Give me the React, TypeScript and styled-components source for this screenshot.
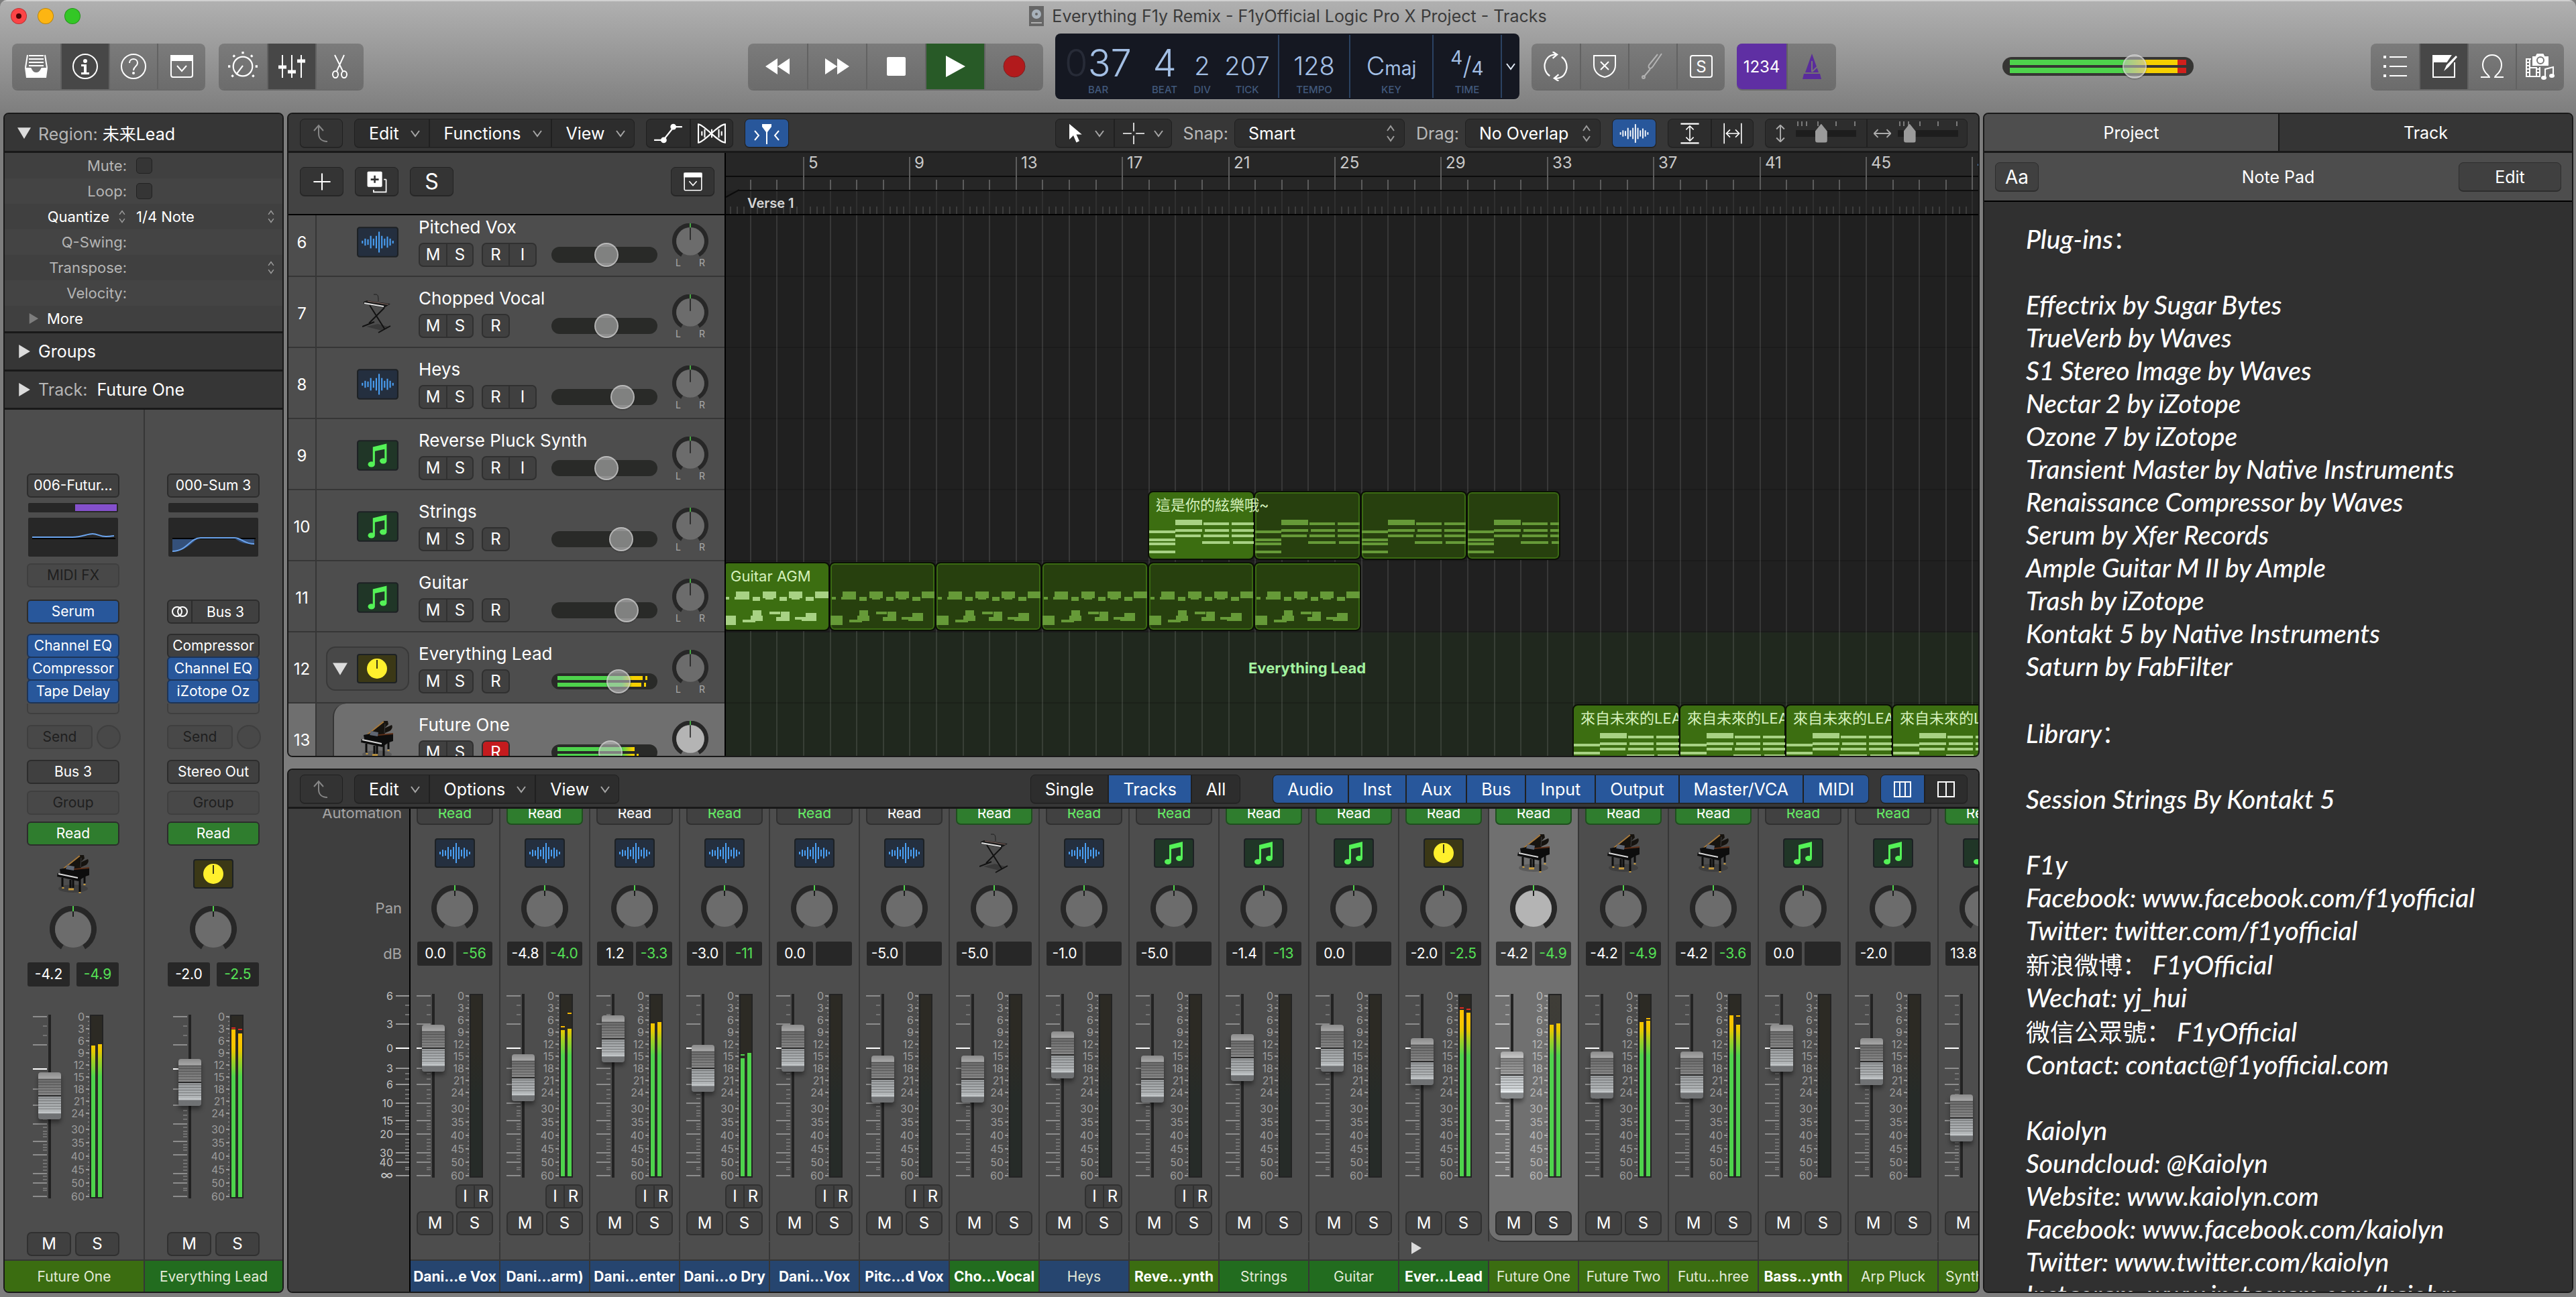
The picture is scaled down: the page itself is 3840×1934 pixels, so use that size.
import React from "react";
import styled, { createGlobalStyle, css } from "styled-components";

const FONT = `Inter, "Noto Sans CJK TC", sans-serif`;
const BLUE = "#28579b";
const INK = "#191919";

const GlobalStyle = createGlobalStyle`
  *, *::before, *::after { box-sizing: border-box; }
  body { margin: 0; background: #7d7d7d; font-family: ${FONT}; font-size: 25px; color: #fff; -webkit-font-smoothing: antialiased; }
  button, input, select { font: inherit; color: inherit; margin: 0; padding: 0; border: 0; background: none; }
  svg { display: block; flex: none; }
  p, h1, h2 { margin: 0; font-weight: inherit; font-size: inherit; }
`;

/* ------------------------------------------------------------------ data */

type IconKind = "wave" | "note" | "keys" | "piano" | "folder";
type ReadMode = "ghost" | "on" | "off";

interface TrackRow {
  n: number;
  name: string;
  icon: IconKind;
  input?: boolean;
  vol: number;
  levels?: { bars: [number, number]; peaks: number[] };
  folder?: boolean;
  selected?: boolean;
}

const TRACKS: TrackRow[] = [
  { n: 6, name: "Pitched Vox", icon: "wave", input: true, vol: 64 },
  { n: 7, name: "Chopped Vocal", icon: "keys", vol: 64 },
  { n: 8, name: "Heys", icon: "wave", input: true, vol: 88 },
  { n: 9, name: "Reverse Pluck Synth", icon: "note", input: true, vol: 64 },
  { n: 10, name: "Strings", icon: "note", vol: 86 },
  { n: 11, name: "Guitar", icon: "note", vol: 94 },
  { n: 12, name: "Everything Lead", icon: "folder", vol: 82, folder: true, levels: { bars: [127, 125], peaks: [131, 129] } },
  { n: 13, name: "Future One", icon: "piano", vol: 70, selected: true, levels: { bars: [115, 115], peaks: [0, 118] } },
];

interface Channel {
  name: string;
  color: string;
  bold?: boolean;
  icon: IconKind;
  read: ReadMode;
  gain: string;
  peak?: string;
  fader: number;
  meter?: [number, number];
  holds?: [number, number];
  clip?: boolean;
  input?: boolean;
  selected?: boolean;
  member?: boolean;
  lastMember?: boolean;
  stack?: boolean;
}

const NAVY = "#26456f";
const GREEN = "#226c1f";
const OLIVE = "#3b6d11";

const CHANNELS: Channel[] = [
  { name: "Dani...e Vox", color: NAVY, bold: true, icon: "wave", read: "ghost", gain: "0.0", peak: "-56", fader: 190, input: true },
  { name: "Dani...arm)", color: NAVY, bold: true, icon: "wave", read: "on", gain: "-4.8", peak: "-4.0", fader: 146, meter: [54, 52], holds: [46, 26], input: true },
  { name: "Dani...enter", color: NAVY, bold: true, icon: "wave", read: "off", gain: "1.2", peak: "-3.3", fader: 204, meter: [44, 42], input: true },
  { name: "Dani...o Dry", color: NAVY, bold: true, icon: "wave", read: "ghost", gain: "-3.0", peak: "-11", fader: 160, meter: [96, 88], holds: [88, 0], input: true },
  { name: "Dani...Vox", color: NAVY, bold: true, icon: "wave", read: "ghost", gain: "0.0", fader: 190, input: true },
  { name: "Pitc...d Vox", color: NAVY, bold: true, icon: "wave", read: "off", gain: "-5.0", fader: 144, input: true },
  { name: "Cho...Vocal", color: GREEN, bold: true, icon: "keys", read: "on", gain: "-5.0", fader: 144 },
  { name: "Heys", color: NAVY, icon: "wave", read: "ghost", gain: "-1.0", fader: 180, input: true },
  { name: "Reve...ynth", color: OLIVE, bold: true, icon: "note", read: "ghost", gain: "-5.0", fader: 144, input: true },
  { name: "Strings", color: GREEN, icon: "note", read: "on", gain: "-1.4", peak: "-13", fader: 176 },
  { name: "Guitar", color: GREEN, icon: "note", read: "on", gain: "0.0", fader: 190 },
  { name: "Ever...Lead", color: GREEN, bold: true, icon: "folder", read: "on", gain: "-2.0", peak: "-2.5", fader: 170, meter: [24, 28], holds: [18, 20], clip: true, stack: true },
  { name: "Future One", color: OLIVE, icon: "piano", read: "on", gain: "-4.2", peak: "-4.9", fader: 150, meter: [46, 44], selected: true, member: true },
  { name: "Future Two", color: OLIVE, icon: "piano", read: "on", gain: "-4.2", peak: "-4.9", fader: 150, meter: [42, 40], holds: [0, 34], member: true },
  { name: "Futu...hree", color: OLIVE, icon: "piano", read: "on", gain: "-4.2", peak: "-3.6", fader: 150, meter: [32, 46], holds: [0, 30], member: true, lastMember: true },
  { name: "Bass...ynth", color: OLIVE, bold: true, icon: "note", read: "ghost", gain: "0.0", fader: 190 },
  { name: "Arp Pluck", color: OLIVE, icon: "note", read: "ghost", gain: "-2.0", fader: 170 },
  { name: "Synth Lead", color: OLIVE, icon: "note", read: "on", gain: "13.8", fader: 86 },
];

const NOTES = [
  "Plug-ins：", "", "Effectrix by Sugar Bytes", "TrueVerb by Waves", "S1 Stereo Image by Waves",
  "Nectar 2 by iZotope", "Ozone 7 by iZotope", "Transient Master by Native Instruments",
  "Renaissance Compressor by Waves", "Serum by Xfer Records", "Ample Guitar M II by Ample",
  "Trash by iZotope", "Kontakt 5 by Native Instruments", "Saturn by FabFilter", "", "Library：", "",
  "Session Strings By Kontakt 5", "", "F1y", "Facebook: www.facebook.com/f1yofficial",
  "Twitter: twitter.com/f1yofficial", "新浪微博： F1yOfficial", "Wechat: yj_hui", "微信公眾號： F1yOfficial",
  "Contact: contact@f1yofficial.com", "", "Kaiolyn", "Soundcloud: @Kaiolyn", "Website: www.kaiolyn.com",
  "Facebook: www.facebook.com/kaiolyn", "Twitter: www.twitter.com/kaiolyn", "Instagram: www.instagram.com/kaiolyn",
];

/* ----------------------------------------------------------------- icons */

const Chevron = ({ c = "#a5a5a5", w = 14 }: { c?: string; w?: number }) => (
  <svg width={w} height={w} viewBox="0 0 14 14" fill="none" stroke={c} strokeWidth="2"><path d="M1 3l6 8 6-8" /></svg>
);
const Stepper = ({ h = 26 }: { h?: number }) => (
  <svg width="14" height={h} viewBox="0 0 14 26" fill="none" stroke="#9b9b9b" strokeWidth="2"><path d="M2 9l5-7 5 7M2 17l5 7 5-7" /></svg>
);
const Tri = ({ dir = "right", s = 18, c = "#dcdcdc" }: { dir?: "right" | "down"; s?: number; c?: string }) => (
  <svg width={s} height={s} viewBox="0 0 18 18" fill={c}><path d={dir === "right" ? "M2 0L17 9 2 18z" : "M0 2h18L9 17z"} /></svg>
);
const BackArrow = () => (
  <svg width="26" height="28" viewBox="0 0 26 28" fill="none" stroke="#868686" strokeWidth="2"><path d="M2 10l7-8 7 8M9 2v12c0 7 4 12 13 12" /></svg>
);

const WaveBars = ({ c }: { c: string }) => (
  <g fill={c}>
    {[4, 10, 8, 18, 10, 18, 30, 18, 10, 16, 10, 4].map((h, i) => (
      <rect key={i} x={7 + i * 4} y={22 - h / 2} width="2" height={h} />
    ))}
  </g>
);
const TileIcon = ({ kind, w = 60, h = 44 }: { kind: IconKind; w?: number; h?: number }) => {
  if (kind === "piano")
    return (
      <svg width="52" height="60" viewBox="0 0 52 60">
        <ellipse cx="26" cy="52" rx="22" ry="6" fill="#000" opacity=".18" />
        <path d="M12 22L36 2h6l1 5-6 6 11-5c2 3 0 7-3 9l-7 3-2 4z" fill="#16130f" />
        <path d="M12 22L36 3" stroke="#a87a3c" strokeWidth="2" />
        <path d="M38 6l-1 14" stroke="#3c3c3c" />
        <path d="M20 23l30-3v3l-12 6z" fill="#5e2f18" />
        <path d="M6 23l10-2 12 3 22-2v10l-6 2-8 5-2 2-32-7 1-5h4z" fill="#0d0d0d" />
        <path d="M17 17l11 2-1 6-12-2z" fill="#5f6672" />
        <path d="M4 30l29 6" stroke="#d9d9d9" strokeWidth="2" />
        <path d="M10 36v13M22 39v12M26 39v12M36 38v19M43 32v12" stroke="#0d0d0d" strokeWidth="3" />
        <path d="M11 50v2M19 53h8M36 57v2M43 45v2" stroke="#c79a3c" strokeWidth="3" />
      </svg>
    );
  if (kind === "keys")
    return (
      <svg width="44" height="60" viewBox="0 0 44 60" fill="none">
        <path d="M6 50l17-4 16 4-10 6z" fill="#000" opacity=".25" />
        <path d="M17 2h3c4 0 4 4 4 10" stroke="#1e1e1e" />
        <path d="M11 18l22 35M33 22L10 45M0 50l18-7M24 59l18-10" stroke="#121212" strokeWidth="2" />
        <path d="M2 13l5-2 35 5-9 6-31-6z" fill="#1a1a1a" />
        <path d="M3 15l29 5" stroke="#e2e2e2" strokeWidth="2" />
        <path d="M8 12l31 5" stroke="#8a6d66" />
      </svg>
    );
  const bg = kind === "wave" ? "#242f3f" : kind === "note" ? "#203627" : "#3b3816";
  return (
    <svg width={w} height={h} viewBox="0 0 60 44">
      <rect x="1" y="1" width="58" height="42" rx="3" fill={bg} stroke="#1d2124" strokeWidth="2" />
      {kind === "wave" && <WaveBars c="#4aa0f5" />}
      {kind === "note" && (
        <g fill="#54f257">
          <path d="M23 10l20-5v24h-3V13l-14 3v18h-3z" />
          <ellipse cx="21" cy="35" rx="5" ry="4" /><ellipse cx="38" cy="30" rx="5" ry="4" />
        </g>
      )}
      {kind === "folder" && (<><circle cx="30" cy="22" r="15" fill="#fff02d" /><path d="M30 9v13" stroke="#3b3816" strokeWidth="2" /></>)}
    </svg>
  );
};

const Knob = ({ size = 70, long, lit }: { size?: number; long?: boolean; lit?: boolean }) => (
  <svg width={size} height={size} viewBox="0 0 70 70" role="img" aria-label="Pan, center">
    <path d="M19 61A31 31 0 1 1 51 61" fill="none" stroke="#272727" strokeWidth="8" />
    <circle cx="35" cy="35" r="27" fill={lit ? "#b4b4b4" : "#6c6c6c"} />
    <path d={long ? "M35 8v24" : "M35 8v8"} stroke="#1e1e1e" strokeWidth="2" />
    <path d="M35 0v8" stroke="#4fd24b" strokeWidth="2" />
  </svg>
);

const Glyph = ({ children, s = 40, o = 1 }: { children: React.ReactNode; s?: number; o?: number }) => (
  <svg width={s} height={s} viewBox="0 0 40 40" fill="none" stroke="#fff" strokeWidth="2" opacity={o}>{children}</svg>
);
const G = {
  library: <Glyph><path d="M9 4h22M9 9h22M9 14h22M9 19h22" /><path d="M7 3L4 22M33 3l3 19" /><path d="M3 22h9c1 0 2 7 8 7s7-7 8-7h9l-2 15H5z" fill="#fff" stroke="none" /></Glyph>,
  info: <Glyph><circle cx="20" cy="20" r="18" /><circle cx="20" cy="12" r="3" fill="#fff" stroke="none" /><path d="M14 17h8v12h4v3H14v-3h4v-9h-4z" fill="#fff" stroke="none" /></Glyph>,
  help: <Glyph><circle cx="20" cy="20" r="18" /><path d="M14 15c0-8 12-8 12 0 0 5-6 5-6 11" /><circle cx="20" cy="30" r="2" fill="#fff" stroke="none" /></Glyph>,
  toolbar: <Glyph><rect x="4" y="4" width="32" height="32" rx="3" /><path d="M4 4h32v7H4z" fill="#fff" /><path d="M13 19l7 8 7-8" /></Glyph>,
  toolbarSm: <Glyph s={32}><rect x="4" y="4" width="32" height="32" rx="2" /><path d="M4 4h32v7H4z" fill="#fff" /><path d="M13 19l7 8 7-8" /></Glyph>,
  smart: <Glyph s={44}><circle cx="20" cy="20" r="13" /><path d="M20 19L11 31" /><path d="M20 0v3M7 5l2 2M33 5l-2 2M0 20h3M37 20h3M5 34l2-2M35 34l-2-2" strokeWidth="3" /></Glyph>,
  mixer: <Glyph><path d="M6 3v34M20 3v34M34 3v34" /><path d="M0 21h12M14 28h12M28 12h12" strokeWidth="5" /></Glyph>,
  scissors: <Glyph><path d="M12 3l12 24M26 3L15 27" /><ellipse cx="13" cy="32" rx="4" ry="5" /><ellipse cx="26" cy="32" rx="4" ry="5" /></Glyph>,
  rewind: <Glyph><path d="M20 8v24L2 20zM38 8v24L20 20z" fill="#fff" stroke="none" /></Glyph>,
  forward: <Glyph><path d="M2 8v24l18-12zM20 8v24l18-12z" fill="#fff" stroke="none" /></Glyph>,
  stop: <Glyph><rect x="6" y="6" width="28" height="28" rx="2" fill="#fff" stroke="none" /></Glyph>,
  play: <Glyph><path d="M6 4v32l29-16z" fill="#fff" stroke="none" /></Glyph>,
  record: <Glyph><circle cx="20" cy="20" r="16" fill="#b21a1c" stroke="#7c2020" strokeWidth="1" /></Glyph>,
  cycle: <Glyph s={44}><path d="M22 4h-4C3 6 1 26 12 33M18 36h5c14-2 16-22 5-29M16 0l6 4-6 5M24 31l-6 5 6 4" /></Glyph>,
  replace: <Glyph><path d="M4 4h32v14c0 10-7 16-16 18C11 34 4 28 4 18z" /><path d="M14 13l12 12M26 13L14 25" /></Glyph>,
  tuner: <Glyph o={0.45}><path d="M33 1L20 20c-3 5-8 3-6-2L27 2M16 24L6 36" /><circle cx="6" cy="36" r="2" /></Glyph>,
  solo: <Glyph><rect x="4" y="4" width="32" height="32" rx="3" /></Glyph>,
  metro: <svg width="40" height="40" viewBox="0 0 40 40"><path d="M20 1l10 28H10zM8 31h24l2 8H6z" fill="#5a2c9c" /><path d="M20 28L34 15M20 12v16" stroke="#757575" strokeWidth="2" /></svg>,
  list: <Glyph><path d="M12 6h26M12 20h26M12 34h26" /><path d="M3 6h4M3 20h4M3 34h4" strokeWidth="4" /></Glyph>,
  notepad: <Glyph><path d="M36 14v22H4V4h26" /><path d="M4 4h26l-6 9H4z" fill="#fff" /><path d="M38 4L24 18l-4 9 7-6L40 6z" fill="#fff" stroke="none" /></Glyph>,
  loop: <Glyph><path d="M3 36h13c0-3-10-6-10-18C6 9 12 3 20 3s14 6 14 15c0 12-10 15-10 18h13" /></Glyph>,
  media: (
    <svg width="44" height="40" viewBox="0 0 44 40" fill="none" stroke="#fff" strokeWidth="2">
      <path d="M1 9h20v26H1zM6 9v26M16 9v26M6 22h10" /><path d="M1 14h5M1 19h5M1 24h5M1 29h5M16 24h5M16 29h5" />
      <path d="M9 4h5l2-4h11l2 4h6v16H9z" fill="#fff" stroke="#757575" /><circle cx="22" cy="11" r="5" stroke="#757575" />
      <path d="M29 37V23l13-3v14" stroke="#757575" strokeWidth="6" /><path d="M29 36V24l12-3v12" />
      <ellipse cx="27" cy="37" rx="3" ry="2" fill="#fff" /><ellipse cx="39" cy="34" rx="3" ry="2" fill="#fff" />
    </svg>
  ),
  automation: <Glyph s={44}><path d="M1 29h12M15 27L27 12M27 11h12" /><circle cx="14" cy="29" r="4" fill="#fff" stroke="none" /><circle cx="27" cy="11" r="4" fill="#fff" stroke="none" /></Glyph>,
  flex: <Glyph s={42}><path d="M1 7v26c8 0 28-26 38-26v26C29 33 9 7 1 7z" /><path d="M6 17v6M10 14v12M30 14v12M34 17v6M20 14v12" /></Glyph>,
  catch: <Glyph><path d="M2 16l6 7-6 7M38 16l-6 7 6 7M20 14v22" /><path d="M13 6h14v4l-6 8h-2l-6-8z" fill="#fff" stroke="none" /></Glyph>,
  pointer: <Glyph s={30}><path d="M8 1v31l8-8 6 14 6-3-6-13h11z" fill="#fff" stroke="none" /></Glyph>,
  marquee: <Glyph s={32}><path d="M20 0v16M20 24v16M0 20h16M24 20h16" /></Glyph>,
  vfit: <Glyph s={32}><path d="M3 2h34M3 38h34" strokeWidth="3" /><path d="M20 7v26M13 13l7-7 7 7M13 27l7 7 7-7" /></Glyph>,
  hfit: <Glyph s={32}><path d="M4 1v38M36 1v38M8 20h24M15 13l-7 7 7 7M25 13l7 7-7 7" /></Glyph>,
  vzoom: <Glyph s={26} o={0.6}><path d="M20 1v38M11 10l9-9 9 9M11 30l9 9 9-9" strokeWidth="3" /></Glyph>,
  hzoom: <Glyph s={26} o={0.6}><path d="M1 20h38M10 11l-9 9 9 9M30 11l9 9-9 9" strokeWidth="3" /></Glyph>,
  plus: <Glyph s={28}><path d="M20 2v36M2 20h36" strokeWidth="3" /></Glyph>,
  dup: <Glyph s={34}><path d="M36 16v22H14v-4" /><path d="M36 16h-4" /><rect x="3" y="2" width="26" height="27" rx="2" fill="#fff" stroke="none" /><path d="M16 9v13M9 16h14" stroke="#333" strokeWidth="3" /></Glyph>,
  three: <svg width="26" height="24" viewBox="0 0 26 24" fill="none" stroke="#fff" strokeWidth="2"><path d="M1 1h24v22H1zM9 1v22M17 1v22" /></svg>,
  two: <svg width="26" height="24" viewBox="0 0 26 24" fill="none" stroke="#fff" strokeWidth="2"><path d="M1 1h24v22H1zM13 1v22" /></svg>,
  stereo: <svg width="26" height="16" viewBox="0 0 26 16" fill="none" stroke="#fff" strokeWidth="2"><circle cx="9" cy="8" r="7" /><circle cx="17" cy="8" r="7" /></svg>,
};

/* ---------------------------------------------------------------- header */

const Window = styled.div`
  display: flex; flex-direction: column; height: 100vh; overflow: hidden;
  border-radius: 10px 10px 0 0; background: #7d7d7d;
`;
const Header = styled.header`
  flex: none; height: 168px; display: grid; grid-template-rows: 44px 106px;
  border-top: 2px solid #d0d0d0; background: linear-gradient(#b0b0b0, #7e7e7e);
`;
const TitleRow = styled.div`
  display: grid; grid-template-columns: 1fr auto 1fr; align-items: center; padding: 0 16px;
`;
const Lights = styled.div` display: flex; gap: 16px; `;
const Light = styled.button<{ $c: string }>`
  width: 24px; height: 24px; border-radius: 50%; background: ${p => p.$c};
  border: 1px solid rgba(0, 0, 0, 0.25); display: grid; place-items: center;
`;
const Dot = styled.i` width: 8px; height: 8px; border-radius: 50%; background: #4a0405; `;
const Title = styled.h1` display: flex; align-items: center; gap: 12px; color: #3b3b3b; font-size: 25px; `;
const ToolRow = styled.div`
  display: grid; grid-template-columns: 1fr auto 1fr; align-items: center; padding: 0 18px;
`;
const Zone = styled.div<{ $gap?: number }>` display: flex; align-items: center; gap: ${p => p.$gap ?? 18}px; `;
const RightZone = styled(Zone)` padding-left: 248px; justify-content: space-between; `;
const CenterZone = styled(Zone)` padding-left: 12px; `;
const HGroup = styled.div`
  display: flex; height: 68px; border-radius: 8px; overflow: hidden; box-shadow: 0 2px 0 rgba(60, 60, 60, 0.4);
  background: linear-gradient(#7b7b7b, #6c6c6c);
`;
const HBtn = styled.button<{ $w?: number; $tone?: string }>`
  width: ${p => p.$w ?? 72}px; display: grid; place-items: center; background: ${p => p.$tone ?? "transparent"};
  & + & { border-left: 2px solid #626262; }
  & > * { grid-area: 1 / 1; }
`;
const Lcd = styled.div`
  display: flex; height: 98px; padding: 2px 0; border-radius: 8px; background: #151822; color: #a3bfe4;
  box-shadow: 0 1px 0 #999;
`;
const LcdCell = styled.div<{ $w: number; $line?: boolean }>`
  width: ${p => p.$w}px; display: flex; flex-direction: column; align-items: center; justify-content: flex-end; padding-bottom: 2px;
  border-left: ${p => (p.$line ? "2px solid #2b4262" : "0")};
`;
const LcdValue = styled.span<{ $big?: boolean }>`
  height: 72px; display: flex; align-items: baseline; font-weight: 300; white-space: pre;
  font-size: ${p => (p.$big ? 56 : 38)}px; line-height: ${p => (p.$big ? 84 : 92)}px;
`;
const LcdDim = styled.span` color: #272b37; `;
const LcdSmall = styled.span<{ $up?: boolean }>` font-size: 28px; font-weight: 400; ${p => p.$up && css`align-self: flex-start; line-height: 68px;`} `;
const LcdLabel = styled.span` height: 20px; font-size: 15px; line-height: 20px; color: #41587b; font-weight: 500; `;
const LcdMenu = styled.button` width: 28px; display: grid; place-items: center; border-left: 2px solid #2b4262; `;

const MasterBox = styled.div` position: relative; width: 285px; height: 38px; display: flex; align-items: center; `;
const MasterTrack = styled.div`
  width: 100%; height: 28px; padding: 4px 11px; border-radius: 14px; background: #363533; display: grid; gap: 4px;
`;
const MasterBar = styled.i`
  background: linear-gradient(90deg, #4ed34c 0 64%, #f6d000 78% 95%, #d0201c 95%);
`;
const roundThumb = css`
  -webkit-appearance: none; width: 36px; height: 36px; border-radius: 50%;
  background: rgba(200, 200, 200, 0.55); border: 2px solid rgba(220, 220, 220, 0.55); box-shadow: 0 1px 2px #1116;
`;
const OverRange = styled.input`
  -webkit-appearance: none; position: absolute; inset: 0; width: 100%; height: 100%; background: transparent;
  &::-webkit-slider-thumb { ${roundThumb} }
`;

const SegGlyphText = styled.span` font-size: 24px; `;

const AppHeader = () => (
  <Header>
    <TitleRow>
      <Lights>
        <Light $c="#fb4446" aria-label="Close"><Dot /></Light>
        <Light $c="#fdb512" aria-label="Minimize" />
        <Light $c="#33c726" aria-label="Zoom" />
      </Lights>
      <Title>
        <svg width="22" height="30" viewBox="0 0 22 30"><rect width="22" height="30" fill="#666" /><circle cx="11" cy="12" r="7" fill="#a8b2bb" /><circle cx="11" cy="12" r="2" fill="#666" /><path d="M3 25h16" stroke="#b0b0b0" strokeWidth="2" /></svg>
        Everything F1y Remix - F1yOfficial Logic Pro X Project - Tracks
      </Title>
    </TitleRow>
    <ToolRow>
      <Zone $gap={20}>
        <HGroup>
          <HBtn aria-label="Library">{G.library}</HBtn>
          <HBtn aria-label="Inspector" $tone="#474747">{G.info}</HBtn>
          <HBtn aria-label="Quick Help">{G.help}</HBtn>
          <HBtn aria-label="Toolbar">{G.toolbar}</HBtn>
        </HGroup>
        <HGroup>
          <HBtn aria-label="Smart Controls">{G.smart}</HBtn>
          <HBtn aria-label="Mixer" $tone="#474747">{G.mixer}</HBtn>
          <HBtn aria-label="Editors">{G.scissors}</HBtn>
        </HGroup>
      </Zone>
      <CenterZone>
        <HGroup>
          <HBtn $w={88} aria-label="Rewind">{G.rewind}</HBtn>
          <HBtn $w={88} aria-label="Forward">{G.forward}</HBtn>
          <HBtn $w={88} aria-label="Stop">{G.stop}</HBtn>
          <HBtn $w={88} aria-label="Play" $tone="#285a27">{G.play}</HBtn>
          <HBtn $w={88} aria-label="Record">{G.record}</HBtn>
        </HGroup>
        <Lcd>
          <LcdCell $w={128}><LcdValue $big><LcdDim>0</LcdDim>37</LcdValue><LcdLabel>BAR</LcdLabel></LcdCell>
          <LcdCell $w={70}><LcdValue $big>4</LcdValue><LcdLabel>BEAT</LcdLabel></LcdCell>
          <LcdCell $w={42}><LcdValue>2</LcdValue><LcdLabel>DIV</LcdLabel></LcdCell>
          <LcdCell $w={92}><LcdValue>207</LcdValue><LcdLabel>TICK</LcdLabel></LcdCell>
          <LcdCell $w={106} $line><LcdValue>128</LcdValue><LcdLabel>TEMPO</LcdLabel></LcdCell>
          <LcdCell $w={124} $line><LcdValue>C<LcdSmall>maj</LcdSmall></LcdValue><LcdLabel>KEY</LcdLabel></LcdCell>
          <LcdCell $w={102} $line><LcdValue><LcdSmall $up>4</LcdSmall>/<LcdSmall>4</LcdSmall></LcdValue><LcdLabel>TIME</LcdLabel></LcdCell>
          <LcdMenu aria-label="Display mode"><Chevron c="#e4ecf8" /></LcdMenu>
        </Lcd>
        <HGroup>
          <HBtn aria-label="Cycle">{G.cycle}</HBtn>
          <HBtn aria-label="Replace">{G.replace}</HBtn>
          <HBtn aria-label="Tuner">{G.tuner}</HBtn>
          <HBtn aria-label="Solo">{G.solo}<SegGlyphText>S</SegGlyphText></HBtn>
        </HGroup>
        <HGroup>
          <HBtn $w={74} $tone="#5f2fa3"><SegGlyphText>1234</SegGlyphText></HBtn>
          <HBtn $w={74} aria-label="Metronome">{G.metro}</HBtn>
        </HGroup>
      </CenterZone>
      <RightZone>
        <MasterBox>
          <MasterTrack><MasterBar /><MasterBar /></MasterTrack>
          <OverRange type="range" aria-label="Master volume" min={0} max={249} defaultValue={179} />
        </MasterBox>
        <HGroup>
          <HBtn aria-label="List editors">{G.list}</HBtn>
          <HBtn aria-label="Note pads" $tone="#474747">{G.notepad}</HBtn>
          <HBtn aria-label="Apple Loops">{G.loop}</HBtn>
          <HBtn aria-label="Browsers">{G.media}</HBtn>
        </HGroup>
      </RightZone>
    </ToolRow>
  </Header>
);

/* ---------------------------------------------------------------- panels */

const Workspace = styled.main`
  flex: 1; min-height: 0; display: grid; grid-template-columns: 418px minmax(0, 1fr) 880px; gap: 5px; padding: 0 4px 6px 5px;
`;
const Panel = styled.section`
  border: 2px solid ${INK}; border-radius: 8px; overflow: hidden; background: #4d4d4d;
  display: flex; flex-direction: column; min-height: 0;
`;
const Center = styled.div` display: flex; flex-direction: column; gap: 17px; min-height: 0; `;
const ArrangePanel = styled(Panel)` flex: 1; `;
const MixerPanel = styled(Panel)` flex: none; height: 782px; `;

const Toolbar = styled.div`
  flex: none; height: 58px; padding: 2px 16px 0 17px; display: flex; align-items: center; gap: 17px;
  background: #373737; border-bottom: 3px solid ${INK};
`;
const Spacer = styled.span` flex: 1; `;
const DGroup = styled.div`
  display: flex; height: 43px; border-radius: 7px; overflow: hidden; background: #2d2d2d;
  border: 1px solid #202020; box-shadow: 0 1px 0 #2229;
`;
const DBtn = styled.button<{ $w?: number; $blue?: boolean }>`
  ${p => (p.$w ? css`width: ${p.$w}px;` : css`padding: 0 21px;`)}
  display: flex; align-items: center; justify-content: center; gap: 14px; white-space: nowrap;
  background: ${p => (p.$blue ? BLUE : "transparent")};
  & + & { border-left: 2px solid #202020; }
`;
const MenuBtn = styled(DBtn)` padding: 0 13px 0 21px; gap: 17px; `;
const Ghost = styled(DGroup)` background: #333; `;
const FieldLabel = styled.label` display: flex; align-items: center; gap: 9px; color: #b9b9b9; `;
const SelectBox = styled.span<{ $w: number }>`
  width: ${p => p.$w}px; height: 43px; display: grid; align-items: center; border-radius: 7px; background: #2d2d2d; border: 1px solid #202020;
  & > * { grid-area: 1 / 1; }
  & > svg { justify-self: end; margin-right: 13px; pointer-events: none; }
`;
const Select = styled.select` appearance: none; width: 100%; height: 100%; padding-left: 20px; color: #fff; `;

const Menus = ({ items }: { items: string[] }) => (
  <>
    <Ghost><DBtn $w={62} aria-label="Back"><BackArrow /></DBtn></Ghost>
    <DGroup>{items.map(t => <MenuBtn key={t}>{t}<Chevron /></MenuBtn>)}</DGroup>
  </>
);

const ZoomGroup = styled(DGroup)` & > * + * { border-left: 2px solid #202020; } `;
const ZoomCell = styled.div` width: 150px; display: flex; align-items: center; gap: 10px; padding: 0 15px 0 9px; `;
const ZoomStack = styled.span` display: grid; width: 90px; & > * { grid-area: 1 / 1; } `;
const ZoomRange = styled.input`
  -webkit-appearance: none; width: 90px; height: 42px; background: linear-gradient(#1d1d1d, #1d1d1d) center / 100% 10px no-repeat;
  &::-webkit-slider-thumb { -webkit-appearance: none; width: 18px; height: 28px; background: #9a9a9a; border-radius: 0 0 4px 4px; clip-path: polygon(50% 0, 100% 40%, 100% 100%, 0 100%, 0 40%); }
`;
const ZoomTicks = () => (
  <svg width="90" height="42" viewBox="0 0 90 42" stroke="#7a7a7a" strokeWidth="2"><path d="M3 3v7M9 3v7M16 3v7M33 3v7M60 3v7M88 3v7" /></svg>
);

/* ------------------------------------------------------------- inspector */

const SectionHead = styled.button<{ $first?: boolean }>`
  flex: none; height: ${p => (p.$first ? 58 : 57)}px; padding-left: 19px; display: flex; align-items: center; gap: 11px; text-align: left;
  background: #363636; border-bottom: 3px solid ${INK};
`;
const Dim = styled.span` color: #b5b5b5; `;
const ParamRow = styled.div<{ $lit?: boolean }>`
  flex: none; height: 38px; padding-right: 10px; display: grid; grid-template-columns: 182px 1fr auto; gap: 14px; align-items: center;
  font-size: 22px; color: ${p => (p.$lit ? "#fff" : "#b5b5b5")}; background: #404040;
  &:nth-of-type(even) { background: #444; }
`;
const ParamLabel = styled.label` display: flex; gap: 12px; align-items: center; justify-content: flex-end; `;
const Tick = styled.input`
  appearance: none; width: 24px; height: 24px; border-radius: 5px; background: #353535; border: 1px solid #222;
`;
const MoreBtn = styled.button` display: flex; gap: 12px; align-items: center; padding-left: 35px; color: #fff; `;
const ParamList = styled.div` flex: none; border-bottom: 3px solid ${INK}; `;

const ChannelPair = styled.div` flex: 1; display: grid; grid-template-columns: 1fr 1fr; min-height: 0; `;
const InsStrip = styled.div`
  display: flex; flex-direction: column; background: #4d4d4d;
  & + & { border-left: 2px solid #363636; }
`;
const InsBody = styled.div` flex: 1; width: 138px; margin: 95px 0 0 33px; display: flex; flex-direction: column; `;
const Slot = styled.button<{ $tone?: string; $mt?: number; $flat?: boolean }>`
  flex: none; height: 36px; margin-top: ${p => p.$mt ?? 0}px; border-radius: 6px; border: 2px solid #2c2c2c; white-space: nowrap;
  font-size: 21px; line-height: 30px; background: ${p => p.$tone ?? "#404040"};
  ${p => p.$flat && css`background: #484848; border-color: #3f3f3f; color: #1f1f1f;`}
`;
const Plugin = styled(Slot)` margin-top: -2px; border-color: ${p => (p.$tone ? "#1d3456" : "#2c2c2c")}; &:first-child { margin-top: 0; } `;
const PluginList = styled.div` margin-top: 15px; display: flex; flex-direction: column; `;
const PluginEnd = styled.i` height: 16px; border: 2px solid #3f3f3f; border-top: 0; border-radius: 0 0 6px 6px; `;
const InputSlot = styled.div` display: grid; grid-template-columns: 34px 1fr; height: 36px; margin-top: 18px; border: 2px solid #2c2c2c; border-radius: 6px; background: #404040; overflow: hidden; `;
const InputPart = styled.button` display: grid; place-items: center; font-size: 21px; & + & { border-left: 2px solid #2c2c2c; } `;
const GainBar = styled.div<{ $on?: boolean }>`
  height: 14px; margin: 8px 2px 0; padding: 2px; border-radius: 2px; background: #272727;
  &::after { content: ""; display: ${p => (p.$on ? "block" : "none")}; margin-left: 68px; height: 10px; background: #8450cc; }
`;
const EqView = styled.div` height: 58px; margin: 8px 2px 0; border-radius: 2px; background: #272727; `;
const SendRow = styled.div` display: grid; grid-template-columns: 98px 36px; gap: 6px; margin: 16px -3px 0 0; `;
const SendDial = styled.i` height: 36px; border-radius: 50%; background: #484848; border: 2px solid #3f3f3f; `;
const IconSpot = styled.div` height: 60px; margin-top: 12px; display: grid; place-items: center; `;
const KnobSpot = styled.div` margin-top: 18px; display: flex; justify-content: center; `;
const DbRow = styled.div<{ $wide?: boolean; $lit?: boolean }>`
  margin: 14px 1px 0; display: grid; grid-template-columns: 1fr 1fr; gap: ${p => (p.$wide ? 10 : 4)}px; font-size: 21px;
  & > span { height: 36px; line-height: 36px; text-align: center; border-radius: 3px; background: ${p => (p.$lit ? "#383838" : "#272727")}; }
  & > span + span { color: #55e056; }
`;
const TwoButtons = styled.div<{ $mt: number; $gap: number }>`
  margin-top: ${p => p.$mt}px; display: grid; grid-template-columns: 1fr 1fr; gap: ${p => p.$gap}px;
`;
const SmallBtn = styled.button` height: 36px; border-radius: 7px; background: #404040; border: 2px solid #303030; font-size: 24px; line-height: 30px; `;
const NameBar = styled.div<{ $c: string; $bold?: boolean }>`
  flex: none; height: 48px; display: grid; place-items: center; border-top: 2px solid #363636; white-space: nowrap; overflow: hidden;
  font-size: 21px; font-weight: ${p => (p.$bold ? 700 : 400)}; color: ${p => (p.$bold ? "#fff" : "#e3ead9")}; background: ${p => p.$c};
`;

/* ----------------------------------------------------------- fader block */

const FaderRow = styled.div` margin-top: 42px; display: flex; position: relative; `;
const FaderInput = styled.input<{ $lit?: boolean }>`
  -webkit-appearance: none; appearance: none; position: absolute; left: 8px; top: -32px; width: 34px; height: 338px;
  writing-mode: vertical-lr; direction: rtl; background: transparent;
  &::-webkit-slider-runnable-track { background: transparent; }
  &::-webkit-slider-thumb {
    -webkit-appearance: none; width: 34px; height: 70px; border-radius: 4px; box-shadow: 0 5px 6px rgba(0, 0, 0, 0.4);
    filter: ${p => (p.$lit ? "brightness(1.2)" : "none")};
    background:
      linear-gradient(#2a2a2a, #2a2a2a) 0 34px / 100% 2px no-repeat,
      repeating-linear-gradient(rgba(0, 0, 0, 0.28) 0 1px, transparent 1px 4px) 0 10px / 100% 48px no-repeat,
      linear-gradient(#8b8b8b, #a6a6a6 9px, #6b6b6b 10px, #868686 34px, #999c9e 36px, #b4b8ba 59px, #d8dcde 60px, #6f7173 62px, #707274);
  }
`;
const MeterBox = styled.div<{ $lit?: boolean }>`
  width: 20px; height: 274px; padding: 2px; display: grid; grid-template-columns: 6px 6px; justify-content: space-between; align-items: end;
  background: ${p => (p.$lit ? "linear-gradient(#3f3d37, #353937)" : "linear-gradient(#2c2a24 30%, #262b28 55%)")};
  box-shadow: inset 0 0 0 2px #232323;
`;
const MeterLane = styled.div` position: relative; height: 270px; display: flex; align-items: flex-end; `;
const MeterFill = styled.i`
  width: 6px; background: linear-gradient(#ffc400 0 36px, #e8c800 52px, #a6ce20 66px, #4ed34c 90px) bottom / 100% 270px no-repeat;
`;
const MeterHold = styled.i<{ $c: string }>` position: absolute; left: 0; width: 6px; height: 2px; background: ${p => p.$c}; `;

const MAJOR = [3, 45, 81, 111, 135, 163, 189, 209, 237, 251, 271];
const MINOR = [17, 31, 119, 127, 143, 150, 156, 168, 174, 178, 182, 194, 198, 202, 217, 222, 227, 232, 241, 246, 259, 262];
const METER_MARKS: [string, number][] = [
  ["0", 3], ["3", 21], ["6", 39], ["9", 57], ["12", 75], ["15", 93], ["18", 111], ["21", 129], ["24", 147],
  ["30", 171], ["35", 191], ["40", 211], ["45", 231], ["50", 251], ["60", 271],
];

const FaderScale = ({ lit }: { lit?: boolean }) => (
  <svg width="27" height="274" viewBox="0 0 27 274">
    {MAJOR.map(y => <rect key={y} x="0" y={y - 1} width="21" height="2" fill={y === 81 ? "#fff" : lit ? "#c0c0c0" : "#8d8d8d"} />)}
    {MINOR.map(y => <rect key={y} x="15" y={y - 1} width="6" height="2" fill={lit ? "#a0a0a0" : "#737373"} />)}
    <rect x="23" y="0" width="4" height="274" fill="#232323" />
  </svg>
);
const MeterScale = ({ w, lit }: { w: number; lit?: boolean }) => {
  const c = lit ? "#b8b8b8" : "#9c9c9c";
  return (
    <svg width={w} height="274" viewBox={`0 0 ${w} 274`} overflow="visible">
      {METER_MARKS.map(([t, y]) => (
        <g key={t}>
          <text x={w - 8} y={y + 6} textAnchor="end" fontSize="16" fill={c}>{t}</text>
          <rect x={w - 6} y={y - 1} width="5" height="2" fill={c} />
        </g>
      ))}
      <path d={`M${w - 2} 3V271`} stroke={c} strokeWidth="2" strokeDasharray="2 4" opacity=".6" />
    </svg>
  );
};

const FaderBlock = ({ ch, scale = 52 }: { ch: Channel; scale?: number }) => (
  <FaderRow>
    <FaderScale lit={ch.selected} />
    <MeterScale w={scale} lit={ch.selected} />
    <MeterBox $lit={ch.selected}>
      {[0, 1].map(i => (
        <MeterLane key={i}>
          {ch.meter && <MeterFill style={{ height: 272 - ch.meter[i] }} />}
          {ch.holds && ch.holds[i] > 0 && (
            <MeterHold $c={ch.clip ? "#e02a20" : ch.holds[i] > 80 ? "#4ed34c" : "#f6b800"} style={{ top: ch.holds[i] }} />
          )}
        </MeterLane>
      ))}
    </MeterBox>
    <FaderInput type="range" aria-label={`${ch.name} volume`} min={0} max={268} defaultValue={ch.fader} $lit={ch.selected} />
  </FaderRow>
);
const FaderInset = styled.div` padding-left: 9px; `;
const InputGap = styled.div` height: 46px; `;

const Inspector = () => {
  const one: Channel = { name: "Future One", color: OLIVE, icon: "piano", read: "on", gain: "-4.2", peak: "-4.9", fader: 150, meter: [46, 44] };
  const two: Channel = { name: "Everything Lead", color: GREEN, icon: "folder", read: "on", gain: "-2.0", peak: "-2.5", fader: 170, meter: [22, 28], holds: [17, 19], clip: true };
  const lower = (ch: Channel, out: string, icon: React.ReactNode) => (
    <>
      <SendRow><Slot $flat>Send</Slot><SendDial /></SendRow>
      <Slot $mt={16}>{out}</Slot>
      <Slot $mt={10} $flat>Group</Slot>
      <Slot $mt={10} $tone="#2f7d2e">Read</Slot>
      <IconSpot>{icon}</IconSpot>
      <KnobSpot><Knob /></KnobSpot>
      <DbRow $wide><span>{ch.gain}</span><span>{ch.peak}</span></DbRow>
      <FaderInset><FaderBlock ch={ch} scale={58} /></FaderInset>
      <TwoButtons $mt={50} $gap={6}><SmallBtn>M</SmallBtn><SmallBtn>S</SmallBtn></TwoButtons>
    </>
  );
  return (
    <Panel>
      <SectionHead $first><Tri dir="down" s={20} /><span><Dim>Region:</Dim> 未来Lead</span></SectionHead>
      <ParamList>
        <ParamRow><ParamLabel htmlFor="mute">Mute:</ParamLabel><Tick id="mute" type="checkbox" /></ParamRow>
        <ParamRow><ParamLabel htmlFor="loop">Loop:</ParamLabel><Tick id="loop" type="checkbox" /></ParamRow>
        <ParamRow $lit><ParamLabel>Quantize <Stepper h={20} /></ParamLabel><span>1/4 Note</span><Stepper h={20} /></ParamRow>
        <ParamRow><ParamLabel>Q-Swing:</ParamLabel></ParamRow>
        <ParamRow><ParamLabel>Transpose:</ParamLabel><span /><Stepper h={20} /></ParamRow>
        <ParamRow><ParamLabel>Velocity:</ParamLabel></ParamRow>
        <ParamRow $lit><MoreBtn><Tri s={16} c="#7d7d7d" />More</MoreBtn></ParamRow>
      </ParamList>
      <SectionHead><Tri s={20} />Groups</SectionHead>
      <SectionHead><Tri s={20} /><span><Dim>Track:</Dim>&nbsp; Future One</span></SectionHead>
      <ChannelPair>
        <InsStrip>
          <InsBody>
            <Slot>006-Futur...</Slot>
            <GainBar $on />
            <EqView><svg width="134" height="58" viewBox="0 0 134 58" fill="none"><path d="M6 31h124" stroke="#000" strokeWidth="2" /><path d="M6 29h60c14 0 22-5 30-5s10 4 20 4 8-1 12-1" stroke="#6ba4ee" strokeWidth="2" /></svg></EqView>
            <Slot $mt={10} $flat>MIDI FX</Slot>
            <Slot $mt={18} $tone={BLUE}>Serum</Slot>
            <PluginList>
              <Plugin $tone={BLUE}>Channel EQ</Plugin><Plugin $tone={BLUE}>Compressor</Plugin><Plugin $tone={BLUE}>Tape Delay</Plugin><PluginEnd />
            </PluginList>
            {lower(one, "Bus 3", <TileIcon kind="piano" />)}
          </InsBody>
          <NameBar $c={OLIVE}>Future One</NameBar>
        </InsStrip>
        <InsStrip>
          <InsBody>
            <Slot>000-Sum 3</Slot>
            <GainBar />
            <EqView><svg width="134" height="58" viewBox="0 0 134 58" fill="none"><path d="M6 32h36c-6 6-18 18-36 18zM100 32h28v7c-16 0-18-1-28-7z" fill="#34507a" /><path d="M6 31h124" stroke="#000" strokeWidth="2" /><path d="M6 50c22 0 26-20 42-20h50c12 0 14 9 30 9" stroke="#6ba4ee" strokeWidth="2" /></svg></EqView>
            <InputGap />
            <InputSlot><InputPart aria-label="Stereo format">{G.stereo}</InputPart><InputPart>Bus 3</InputPart></InputSlot>
            <PluginList>
              <Plugin>Compressor</Plugin><Plugin $tone={BLUE}>Channel EQ</Plugin><Plugin $tone={BLUE}>iZotope Oz</Plugin><PluginEnd />
            </PluginList>
            {lower(two, "Stereo Out", <TileIcon kind="folder" />)}
          </InsBody>
          <NameBar $c={GREEN}>Everything Lead</NameBar>
        </InsStrip>
      </ChannelPair>
    </Panel>
  );
};

/* --------------------------------------------------------------- arrange */

const Arrange = styled.div` flex: 1; min-height: 0; display: grid; grid-template-columns: 652px minmax(0, 1fr); grid-template-rows: 93px minmax(0, 1fr); `;
const TrackTools = styled.div`
  padding: 0 15px 6px 17px; display: flex; align-items: center; gap: 17px; background: #434343;
  border-right: 2px solid #000; border-bottom: 2px solid #000;
`;
const ToolBtn = styled.button`
  width: 65px; height: 43px; display: grid; place-items: center; border-radius: 7px; background: #343434; border: 1px solid #232323; font-size: 32px; line-height: 40px;
  box-shadow: 0 1px 0 #2a2a2a;
`;
const TrackList = styled.div` overflow: hidden; border-right: 2px solid #000; `;
const Scrolled = styled.div<{ $by: number }>` margin-top: -${p => p.$by}px; `;
const Row = styled.div` height: 106px; display: grid; grid-template-columns: 42px 1fr; background: #4d4d4d; `;
const RowNum = styled.div<{ $sel?: boolean }>`
  display: grid; place-items: center; padding-top: 4px; border-right: 2px solid #363636; border-bottom: 2px solid #363636; background: ${p => (p.$sel ? "#6f6f6f" : "#4d4d4d")};
  font-size: 24px;
`;
const RowMain = styled.div<{ $sel?: boolean }>`
  display: grid; grid-template-columns: 152px 198px 158px 54px; border-bottom: 2px solid #363636;
  ${p => p.$sel && css`margin-left: 24px; grid-template-columns: 126px 198px 158px 54px; background: #6f6f6f; border-left: 2px solid #363636; border-radius: 20px 0 0 0;`}
`;
const IconCell = styled.div<{ $pad: number }>` padding: 4px 0 0 ${p => p.$pad}px; display: flex; align-items: center; `;
const FolderBox = styled.div`
  width: 124px; height: 66px; display: flex; align-items: center; gap: 14px; padding-left: 8px; background: #484848; border: 2px solid #393939; border-radius: 14px;
`;
const PlainBtn = styled.button` display: grid; place-items: center; `;
const NameCell = styled.div` padding-top: 16px; white-space: nowrap; font-size: 26px; line-height: 32px; `;
const Controls = styled.div` margin-top: 7px; display: flex; gap: 12px; `;
const LGroup = styled.div` display: flex; height: 36px; border: 2px solid #303030; border-radius: 7px; background: #404040; overflow: hidden; `;
const LBtn = styled.button<{ $armed?: boolean; $w?: number }>`
  width: ${p => p.$w ?? 39}px; font-size: 24px; line-height: 30px; background: ${p => (p.$armed ? "#c51b1e" : "transparent")};
  & + & { border-left: 2px solid #303030; }
`;
const VolCell = styled.div` padding-top: 55px; `;
const VolBox = styled.div` position: relative; height: 36px; display: flex; align-items: center; `;
const VolTrack = styled.div` width: 158px; height: 24px; padding: 4px 9px; border-radius: 12px; background: #292a28; display: grid; gap: 4px; `;
const VolLane = styled.div` display: flex; `;
const VolBar = styled.i` background: linear-gradient(90deg, #4ed34c 96px, #f6d000 112px) left / 140px 100%; `;
const VolPeak = styled.i` width: 3px; background: #f6d000; `;
const KnobCell = styled.div` padding: 26px 0 0; width: 54px; margin-left: 22px; font-size: 14px; color: #a8a8a8; `;
const LR = styled.div` display: flex; justify-content: space-between; padding: 0 5px; line-height: 10px; `;

const BAR = (n: number) => Math.round(115 + 39.6 * (n - 5));
const Lanes = styled.div` position: relative; overflow: hidden; background: #202020; `;
const Lane = styled.div<{ $green?: boolean }>`
  height: 106px; border-bottom: 2px solid ${p => (p.$green ? "#1b2119" : "#1b1b1b")};
  background: ${p => (p.$green ? "#20281e" : "transparent")};
`;
const GridLayer = styled.svg` position: absolute; inset: 0; width: 100%; height: 100%; `;
const ClipLayer = styled.div` position: absolute; inset: 0; overflow: hidden; `;
const ClipLane = styled.div<{ $skip?: number }>` position: relative; height: 106px; margin-top: ${p => (p.$skip ?? 0) * 106}px; `;
const Clip = styled.div<{ $loop?: boolean }>`
  position: absolute; top: 1px; height: 103px; overflow: ${p => (p.$loop ? "hidden" : "visible")}; border-radius: 8px;
  background: ${p => (p.$loop ? "#27400e" : "#3c6e11")};
  border: 2px solid #0b0f06; box-shadow: ${p => (p.$loop ? "inset 0 0 0 2px #3a6a12" : "none")};
  z-index: ${p => (p.$loop ? 0 : 1)};
`;
const ClipName = styled.span<{ $cut?: boolean }>`
  position: relative; display: block; padding: 4px 0 0 10px; font-size: 22px; line-height: 30px; color: #d5f0bd; white-space: nowrap;
  overflow: ${p => (p.$cut ? "hidden" : "visible")};
`;
const ClipNotes = styled.svg` position: absolute; left: 0; top: 0; `;
const FolderName = styled.span` display: block; padding: 38px 0 0 779px; font-size: 22px; font-weight: 700; color: #a3f3a0; line-height: 30px; `;

type NoteRect = [number, number, number, number];
const CHORDS: NoteRect[] = [
  [0, 59, 39, 4], [0, 71, 39, 4], [0, 77, 39, 4], [0, 89, 39, 4],
  [39, 43, 40, 8], [81, 47, 38, 4], [123, 47, 36, 4],
  [39, 57, 40, 4], [83, 57, 36, 4], [123, 57, 36, 4],
  [39, 65, 38, 4], [81, 65, 38, 4], [123, 65, 36, 4],
  [79, 75, 41, 4], [125, 75, 34, 4],
];
const RIFF: NoteRect[] = [
  [2, 52, 6, 4], [16, 52, 22, 4], [18, 44, 20, 12], [43, 52, 11, 6], [58, 44, 20, 10], [62, 52, 12, 4], [83, 52, 11, 6],
  [97, 44, 20, 10], [101, 52, 12, 4], [122, 52, 12, 6], [136, 44, 20, 10],
  [0, 80, 18, 14], [28, 86, 19, 4], [40, 80, 18, 8], [43, 72, 13, 10],
  [68, 74, 16, 4], [78, 82, 20, 6], [85, 74, 13, 12], [106, 82, 32, 4], [122, 76, 16, 12], [116, 86, 16, 2],
];

const ClipItem = ({ from, to, loop, notes, name, cut }: { from: number; to: number; loop?: boolean; notes: NoteRect[]; name?: string; cut?: boolean }) => (
  <Clip $loop={loop} style={{ left: BAR(from) - 1, width: BAR(to) - BAR(from) + 1 }}>
    <ClipNotes width={BAR(to) - BAR(from) - 2} height="99" fill={loop ? "#669a38" : "#a8d284"}>
      {notes.map(([x, y, w, h], i) => <rect key={i} x={x} y={y - 2} width={w} height={h} />)}
    </ClipNotes>
    {name && <ClipName $cut={cut}>{name}</ClipName>}
  </Clip>
);

const bars = Array.from({ length: 56 }, (_, i) => i + 2);
const Ruler = styled.svg` display: block; width: 100%; height: 93px; background: #262626; border-bottom: 2px solid #000; `;

const ArrangeView = () => (
  <ArrangePanel>
    <Toolbar>
      <Menus items={["Edit", "Functions", "View"]} />
      <DGroup>
        <DBtn $w={64} aria-label="Automation">{G.automation}</DBtn>
        <DBtn $w={64} aria-label="Flex">{G.flex}</DBtn>
      </DGroup>
      <DGroup><DBtn $w={64} $blue aria-label="Catch playhead">{G.catch}</DBtn></DGroup>
      <Spacer />
      <DGroup>
        <DBtn $w={86} aria-label="Pointer tool">{G.pointer}<Chevron /></DBtn>
        <DBtn $w={86} aria-label="Marquee tool">{G.marquee}<Chevron /></DBtn>
      </DGroup>
      <FieldLabel>Snap:<SelectBox $w={254}><Select defaultValue="Smart"><option>Smart</option><option>Bar</option></Select><Stepper /></SelectBox></FieldLabel>
      <FieldLabel>Drag:<SelectBox $w={202}><Select defaultValue="No Overlap"><option>No Overlap</option><option>Overlap</option></Select><Stepper /></SelectBox></FieldLabel>
      <DGroup><DBtn $w={64} $blue aria-label="Waveform zoom"><svg width="50" height="38" viewBox="3 3 54 38"><WaveBars c="#fff" /></svg></DBtn></DGroup>
      <DGroup>
        <DBtn $w={63} aria-label="Fit vertically">{G.vfit}</DBtn>
        <DBtn $w={63} aria-label="Fit horizontally">{G.hfit}</DBtn>
      </DGroup>
      <ZoomGroup>
        <ZoomCell>{G.vzoom}<ZoomStack><ZoomRange type="range" aria-label="Vertical zoom" defaultValue={40} /><ZoomTicks /></ZoomStack></ZoomCell>
        <ZoomCell>{G.hzoom}<ZoomStack><ZoomRange type="range" aria-label="Horizontal zoom" defaultValue={12} /><ZoomTicks /></ZoomStack></ZoomCell>
      </ZoomGroup>
    </Toolbar>
    <Arrange>
      <TrackTools>
        <ToolBtn aria-label="Add track">{G.plus}</ToolBtn>
        <ToolBtn aria-label="Duplicate track">{G.dup}</ToolBtn>
        <ToolBtn>S</ToolBtn>
        <Spacer />
        <ToolBtn aria-label="Track header options">{G.toolbarSm}</ToolBtn>
      </TrackTools>
      <Ruler>
        <rect x="0" y="56" width="100%" height="37" fill="#222" />
        <path d="M0 35H4000M18 56H4000M0 66L20 55" stroke="#0c0c0c" strokeWidth="2" />
        {bars.map(b => {
          const x = BAR(b);
          const major = b % 4 === 1;
          return (
            <g key={b}>
              <rect x={x} y={major ? 6 : 40} width="2" height={major ? 49 : 15} fill="#5c5c5c" />
              <rect x={x} y="57" width="2" height="36" fill="#303030" />
              {[10, 20, 30].map(d => <rect key={d} x={x + d} y="80" width="2" height="11" fill="#3c3c3c" />)}
              {major && b < 50 && <text x={x + 8} y="23" fontSize="24" fill="#c9c9c9">{b}</text>}
            </g>
          );
        })}
        <text x="32" y="82" fontSize="20" fontWeight="600" fill="#d6d6d6">Verse 1</text>
      </Ruler>
      <TrackList>
        <Scrolled $by={14}>
          {TRACKS.map(t => (
            <Row key={t.n}>
              <RowNum $sel={t.selected}>{t.n}</RowNum>
              <RowMain $sel={t.selected}>
                <IconCell $pad={t.folder ? 14 : t.icon === "piano" ? 38 : t.icon === "keys" ? 68 : 60}>
                  {t.folder
                    ? <FolderBox><PlainBtn aria-label="Collapse stack"><Tri dir="down" s={22} /></PlainBtn><TileIcon kind="folder" /></FolderBox>
                    : <TileIcon kind={t.icon} w={62} h={46} />}
                </IconCell>
                <NameCell>
                  {t.name}
                  <Controls>
                    <LGroup><LBtn>M</LBtn><LBtn>S</LBtn></LGroup>
                    <LGroup><LBtn $w={38} $armed={t.selected}>R</LBtn>{t.input && <LBtn $w={40}>I</LBtn>}</LGroup>
                  </Controls>
                </NameCell>
                <VolCell>
                  <VolBox>
                    <VolTrack>
                      {t.levels && t.levels.bars.map((w, i) => (
                        <VolLane key={i}>
                          <VolBar style={{ width: w }} />
                          {t.levels!.peaks[i] > 0 && <VolPeak style={{ marginLeft: t.levels!.peaks[i] - w }} />}
                        </VolLane>
                      ))}
                    </VolTrack>
                    <OverRange type="range" aria-label={`${t.name} volume`} min={0} max={122} defaultValue={t.vol} />
                  </VolBox>
                </VolCell>
                <KnobCell><Knob size={54} long lit={t.selected} /><LR><span>L</span><span>R</span></LR></KnobCell>
              </RowMain>
            </Row>
          ))}
        </Scrolled>
      </TrackList>
      <Lanes>
        <Scrolled $by={14}>
          <Lane /><Lane /><Lane /><Lane />
          <Lane /><Lane /><Lane $green /><Lane $green />
        </Scrolled>
        <GridLayer>{bars.map(b => <rect key={b} x={BAR(b)} y="0" width="2" height="100%" fill="#fff" fillOpacity=".11" />)}</GridLayer>
        <ClipLayer>
          <Scrolled $by={14}>
            <ClipLane $skip={4}>
              <ClipItem from={18} to={22} notes={CHORDS} name="這是你的絃樂哦~" />
              <ClipItem from={22} to={26} loop notes={CHORDS} /><ClipItem from={26} to={30} loop notes={CHORDS} /><ClipItem from={30} to={33.5} loop notes={CHORDS} />
            </ClipLane>
            <ClipLane>
              <ClipItem from={2} to={6} notes={RIFF} name="Guitar AGM" />
              {[6, 10, 14, 18, 22].map(b => <ClipItem key={b} from={b} to={b + 4} loop notes={RIFF} />)}
            </ClipLane>
            <ClipLane><FolderName>Everything Lead</FolderName></ClipLane>
            <ClipLane>
              {[34, 38, 42, 46].map(b => <ClipItem key={b} from={b} to={b + 4} notes={CHORDS} name="來自未來的LEAD" cut />)}
            </ClipLane>
          </Scrolled>
        </ClipLayer>
      </Lanes>
    </Arrange>
  </ArrangePanel>
);

/* ----------------------------------------------------------------- mixer */

const MixerBody = styled.div` flex: 1; min-height: 0; display: flex; overflow: hidden; background: #4d4d4d; `;
const MixerLabels = styled.div`
  flex: none; width: 182px; background: #3e3e3e; border-right: 2px solid #000; color: #a5a5a5; font-size: 22px; text-align: right;
`;
const LabelLine = styled.div<{ $h: number }>` height: ${p => p.$h}px; line-height: 36px; padding-right: 11px; `;
const Strips = styled.div` flex: 1; min-width: 0; display: flex; overflow: hidden; `;
const Strip = styled.div` flex: none; width: 134px; display: flex; flex-direction: column; `;
const StripBody = styled.div<{ $sel?: boolean; $member?: boolean }>`
  flex: none; height: 646px; padding: 0 9px; border-right: 2px solid #363636;
  border-bottom: 2px solid ${p => (p.$member ? "#363636" : "transparent")};
  background: ${p => (p.$sel ? "#707070" : "transparent")};
  border-bottom-left-radius: ${p => (p.$sel ? 20 : 0)}px;
`;
const Foot = styled.div<{ $line?: boolean }>` flex: 1; min-height: 0; padding-left: 16px; display: flex; align-items: flex-start; border-right: 2px solid ${p => (p.$line ? "#363636" : "transparent")}; `;
const StripName = styled(NameBar)` border-right: 2px solid #363636; `;
const ReadBtn = styled.button<{ $m: ReadMode }>`
  display: block; width: 100%; height: 36px; margin-top: -12px; border-radius: 7px; border: 2px solid ${p => (p.$m === "on" ? "#1f4f1e" : "#303030")};
  font-size: 21px; line-height: 34px; color: ${p => (p.$m === "ghost" ? "#66ee66" : "#fff")}; background: ${p => (p.$m === "on" ? "#2f7d2e" : "#414141")};
`;
const Monitor = styled.div<{ $hide?: boolean }>`
  height: 36px; margin: 10px 0 4px; display: flex; justify-content: flex-end; visibility: ${p => (p.$hide ? "hidden" : "visible")};
`;
const FilterGap = styled.span` width: 14px; `;

const SideScale = () => (
  <svg width="180" height="290" viewBox="0 0 180 290" overflow="visible">
    {["6", "3", "0", "3", "6", "10", "15", "20", "30", "40", "∞"].map((t, i) => (
      <g key={i}>
        <text x="156" y={MAJOR[i] + 6} textAnchor="end" fontSize={t === "∞" ? 20 : 16} fill="#c4c4c4">{t}</text>
        <rect x="160" y={MAJOR[i] - 1} width="20" height="2" fill={i === 2 ? "#fff" : "#999"} />
      </g>
    ))}
    {MINOR.map(y => <rect key={y} x="174" y={y - 1} width="6" height="2" fill="#777" />)}
  </svg>
);

const MixerView = () => (
  <MixerPanel>
    <Toolbar>
      <Menus items={["Edit", "Options", "View"]} />
      <Spacer />
      <DGroup><DBtn>Single</DBtn><DBtn $blue>Tracks</DBtn><DBtn>All</DBtn></DGroup>
      <FilterGap />
      <DGroup>{["Audio", "Inst", "Aux", "Bus", "Input", "Output", "Master/VCA", "MIDI"].map(t => <DBtn key={t} $blue>{t}</DBtn>)}</DGroup>
      <DGroup><DBtn $w={64} $blue aria-label="Narrow strips">{G.three}</DBtn><DBtn $w={64} aria-label="Wide strips">{G.two}</DBtn></DGroup>
    </Toolbar>
    <MixerBody>
      <MixerLabels>
        <Scrolled $by={12}>
          <LabelLine $h={142}>Automation</LabelLine>
          <LabelLine $h={68}>Pan</LabelLine>
          <LabelLine $h={78}>dB</LabelLine>
          <SideScale />
        </Scrolled>
      </MixerLabels>
      <Strips>
        {CHANNELS.map((c, i) => (
          <Strip key={i}>
            <StripBody $sel={c.selected} $member={c.member}>
              <ReadBtn $m={c.read}>Read</ReadBtn>
              <IconSpot><TileIcon kind={c.icon} /></IconSpot>
              <KnobSpot><Knob lit={c.selected} /></KnobSpot>
              <DbRow $lit={c.selected}><span>{c.gain}</span><span>{c.peak}</span></DbRow>
              <FaderBlock ch={c} />
              <Monitor $hide={!c.input}><LGroup><LBtn $w={25}>I</LBtn><LBtn $w={27}>R</LBtn></LGroup></Monitor>
              <TwoButtons $mt={0} $gap={4}><SmallBtn>M</SmallBtn><SmallBtn>S</SmallBtn></TwoButtons>
            </StripBody>
            <Foot $line={(!c.member && !c.stack) || c.lastMember}>
              {c.stack && <PlainBtn aria-label="Expand stack"><Tri s={18} /></PlainBtn>}
            </Foot>
            <StripName $c={c.color} $bold={c.bold}>{c.name}</StripName>
          </Strip>
        ))}
      </Strips>
    </MixerBody>
  </MixerPanel>
);

/* ----------------------------------------------------------------- notes */

const Tabs = styled.div` flex: none; height: 58px; display: grid; grid-template-columns: 1fr 1fr; border-bottom: 3px solid ${INK}; `;
const Tab = styled.button<{ $on?: boolean }>` background: ${p => (p.$on ? "#4e4e4e" : "#353535")}; & + & { border-left: 2px solid ${INK}; } `;
const PadBar = styled.div`
  flex: none; height: 73px; padding: 0 16px; display: grid; grid-template-columns: 153px 1fr 153px; align-items: center; text-align: center;
  background: #4d4d4d; border-bottom: 2px solid #000;
`;
const PadBtn = styled.button<{ $w: number; $large?: boolean }>`
  width: ${p => p.$w}px; height: 43px; border-radius: 7px; background: #404040; border: 1px solid #2e2e2e; box-shadow: 0 1px 0 #2e2e2e;
  font-size: ${p => (p.$large ? 28 : 25)}px; line-height: 40px;
`;
const Pad = styled.div` flex: 1; min-height: 0; overflow: hidden; padding: 29px 0 0 62px; background: #303030; `;
const NoteLine = styled.p<{ $tall?: boolean }>`
  height: ${p => (p.$tall ? 51 : 49)}px; line-height: ${p => (p.$tall ? 51 : 49)}px; white-space: pre;
  font-family: Lato, "Noto Sans CJK SC", sans-serif; font-style: italic; font-weight: 500; font-size: 39px;
`;
const Han = styled.span` font-family: "Noto Sans CJK SC", sans-serif; font-style: normal; font-weight: 400; font-size: 36px; `;

const NoteText = ({ text }: { text: string }) => (
  <>{text.split(/([\u3000-\u9fff\uff00-\uffef]+)/).map((s, i) => (i % 2 ? <Han key={i} lang="zh-Hans">{s}</Han> : s))}</>
);

const NotePad = () => (
  <Panel>
    <Tabs><Tab $on>Project</Tab><Tab>Track</Tab></Tabs>
    <PadBar><PadBtn $w={65} $large>Aa</PadBtn><h2>Note Pad</h2><PadBtn $w={153}>Edit</PadBtn></PadBar>
    <Pad>{NOTES.map((t, i) => <NoteLine key={i} $tall={t.includes("：")}><NoteText text={t} /></NoteLine>)}</Pad>
  </Panel>
);

export default function App() {
  return (
    <>
      <GlobalStyle />
      <Window>
        <AppHeader />
        <Workspace>
          <Inspector />
          <Center><ArrangeView /><MixerView /></Center>
          <NotePad />
        </Workspace>
      </Window>
    </>
  );
}
